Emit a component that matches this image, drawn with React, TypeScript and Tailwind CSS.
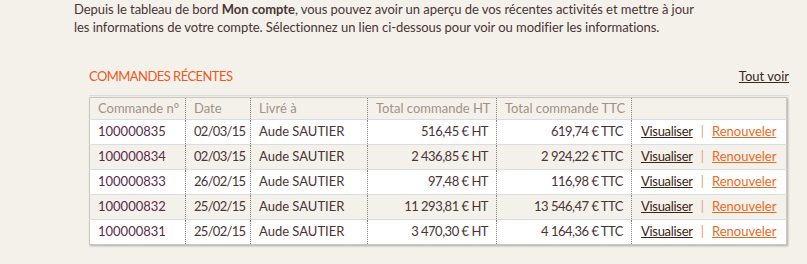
const ORDERS = [
  { id: "100000835", date: "02/03/15", to: "Aude SAUTIER", ht: "516,45 € HT", ttc: "619,74 € TTC" },
  { id: "100000834", date: "02/03/15", to: "Aude SAUTIER", ht: "2 436,85 € HT", ttc: "2 924,22 € TTC" },
  { id: "100000833", date: "26/02/15", to: "Aude SAUTIER", ht: "97,48 € HT", ttc: "116,98 € TTC" },
  { id: "100000832", date: "25/02/15", to: "Aude SAUTIER", ht: "11 293,81 € HT", ttc: "13 546,47 € TTC" },
  { id: "100000831", date: "25/02/15", to: "Aude SAUTIER", ht: "3 470,30 € HT", ttc: "4 164,36 € TTC" },
];

const font = { fontFamily: '"Trebuchet MS", Lato, sans-serif' };

export default function App() {
  return (
    <div className="min-h-[264px] w-[807px] whitespace-nowrap bg-[#f4f1eb] text-[13px] text-[#4a3434]" style={font}>
      <p className="pl-[74px] leading-[18px] tracking-[-0.05px]">
        Depuis le tableau de bord <strong className="font-bold">Mon compte</strong>, vous pouvez avoir un aperçu de vos récentes activités et mettre à jour
        <br />
        les informations de votre compte. Sélectionnez un lien ci-dessous pour voir ou modifier les informations.
      </p>

      <div className="ml-[89px] mt-[31px] w-[700px]">
        <div className="flex items-center justify-between border-b border-[#d9dce3] pb-[10px] leading-[18px]">
          <h2 className="text-[13px] uppercase tracking-[-0.55px] text-[#ec5a1c]">Commandes récentes</h2>
          <a href="#" className="text-[#3d2818] underline">Tout voir</a>
        </div>

        <table className="mt-[1px] w-[698px] table-fixed border-collapse border border-[#cdc6bd] shadow-[1px_1px_2px_rgba(0,0,0,0.3)]">
          <colgroup>
            <col className="w-[96px]" />
            <col className="w-[65px]" />
            <col className="w-[117px]" />
            <col className="w-[129px]" />
            <col className="w-[135px]" />
            <col />
          </colgroup>
          <thead>
            <tr className="h-[22px] bg-[#f4f1eb] text-left text-[#a09283]">
              <th className="px-[8px] font-normal">Commande n°</th>
              <th className="border-l border-dotted border-[#8c8072] px-[8px] font-normal">Date</th>
              <th className="border-l border-dotted border-[#8c8072] px-[8px] font-normal">Livré à</th>
              <th className="border-l border-dotted border-[#8c8072] px-[8px] text-right font-normal">Total commande HT</th>
              <th className="border-l border-dotted border-[#8c8072] px-[8px] text-right font-normal">Total commande TTC</th>
              <th className="border-l border-dotted border-[#8c8072] px-[8px] font-normal"></th>
            </tr>
          </thead>
          <tbody>
            {ORDERS.map((o, i) => (
              <tr
                key={o.id}
                className={`h-[25px] border-t border-[#d9dce3] ${i % 2 === 1 ? "bg-[#f4f1eb]" : "bg-white"}`}
              >
                <td className="px-[8px] text-[#5a2c48]">{o.id}</td>
                <td className="border-l border-dotted border-[#8c8072] px-[8px] tracking-[-0.7px]">{o.date}</td>
                <td className="border-l border-dotted border-[#8c8072] px-[8px]">{o.to}</td>
                <td className="border-l border-dotted border-[#8c8072] px-[8px] text-right tracking-[-0.5px]">{o.ht}</td>
                <td className="border-l border-dotted border-[#8c8072] px-[8px] text-right tracking-[-0.5px]">{o.ttc}</td>
                <td className="border-l border-dotted border-[#8c8072] pl-[9px] text-left">
                  <a href="#" className="tracking-[-0.3px] text-[#3d2412] underline">Visualiser</a>
                  <span className="mx-[8px] text-[#e0a46a]">|</span>
                  <a href="#" className="text-[#ea6a1e] underline">Renouveler</a>
                </td>
              </tr>
            ))}
          </tbody>
        </table>
      </div>
    </div>
  );
}
